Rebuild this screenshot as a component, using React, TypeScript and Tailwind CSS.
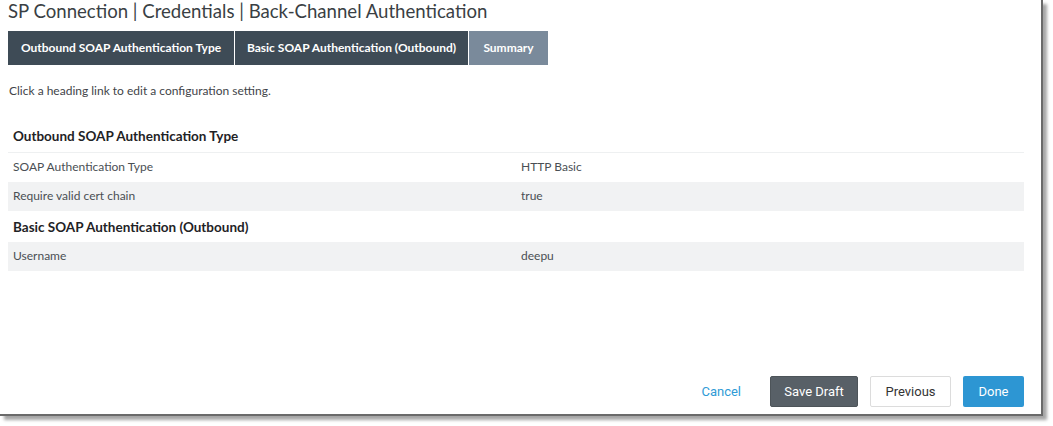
import React from "react";

const rows1 = [
  { k: "SOAP Authentication Type", v: "HTTP Basic", grey: false },
  { k: "Require valid cert chain", v: "true", grey: true },
];

export default function App() {
  return (
    <div className="w-[1053px] h-[426px] bg-white overflow-hidden" style={{ fontFamily: "Lato, 'Open Sans', sans-serif" }}>
      <div className="w-[1043px] h-[416px] bg-white border-r-2 border-b-2 border-[#6a6a6a] shadow-[4px_4px_3px_rgba(0,0,0,0.35)] flex flex-col">
        <div className="pl-[8px] h-[22px] flex items-center text-[18.6px] text-[#3a3f44] leading-none">
          SP Connection | Credentials | Back-Channel Authentication
        </div>
        <div className="flex pl-[8px] mt-[9px] h-[34px] text-[12px] font-bold text-white">
          <div className="w-[226px] bg-[#3e4b56] flex items-center justify-center">Outbound SOAP Authentication Type</div>
          <div className="w-[1px] bg-white" />
          <div className="w-[233px] bg-[#3e4b56] flex items-center justify-center">Basic SOAP Authentication (Outbound)</div>
          <div className="w-[1px] bg-white" />
          <div className="w-[79px] bg-[#7a8a9b] flex items-center justify-center">Summary</div>
        </div>
        <div className="pl-[9px] mt-[18px] text-[12px] text-[#3f4449] leading-[16px]">
          Click a heading link to edit a configuration setting.
        </div>
        <div className="ml-[8px] w-[1016px] mt-[22px]">
          <div className="h-[32px] pl-[5px] flex items-center text-[13.5px] font-bold text-[#1f2326] border-b border-[#eef0f1]">
            Outbound SOAP Authentication Type
          </div>
          {rows1.map((r) => (
            <div key={r.k} className={`h-[29px] pb-[2px] flex items-center text-[12px] text-[#4a4f54] ${r.grey ? "bg-[#f1f2f3]" : ""}`}>
              <div className="w-[513px] pl-[5px]">{r.k}</div>
              <div>{r.v}</div>
            </div>
          ))}
          <div className="h-[31px] pl-[5px] pt-[1px] flex items-center text-[13.5px] font-bold text-[#1f2326]">
            Basic SOAP Authentication (Outbound)
          </div>
          <div className="h-[29px] pb-[1px] flex items-center text-[12px] text-[#4a4f54] bg-[#f1f2f3]">
            <div className="w-[513px] pl-[5px]">Username</div>
            <div>deepu</div>
          </div>
        </div>
        <div className="flex-1" />
        <div className="flex items-center justify-end pr-[17px] pb-[7px] text-[13px]" style={{ fontFamily: "Roboto, Arial, sans-serif" }}>
          <button className="text-[#2e9bd6] mr-[29px]">Cancel</button>
          <button className="w-[88px] h-[31px] rounded-[2px] bg-[#586067] border border-[#4d5459] text-white mr-[12px]">Save Draft</button>
          <button className="w-[81px] h-[31px] rounded-[2px] bg-white border border-[#dcdcdc] text-[#333] mr-[12px]">Previous</button>
          <button className="w-[61px] h-[31px] rounded-[2px] bg-[#2d96d3] text-white">Done</button>
        </div>
      </div>
    </div>
  );
}
